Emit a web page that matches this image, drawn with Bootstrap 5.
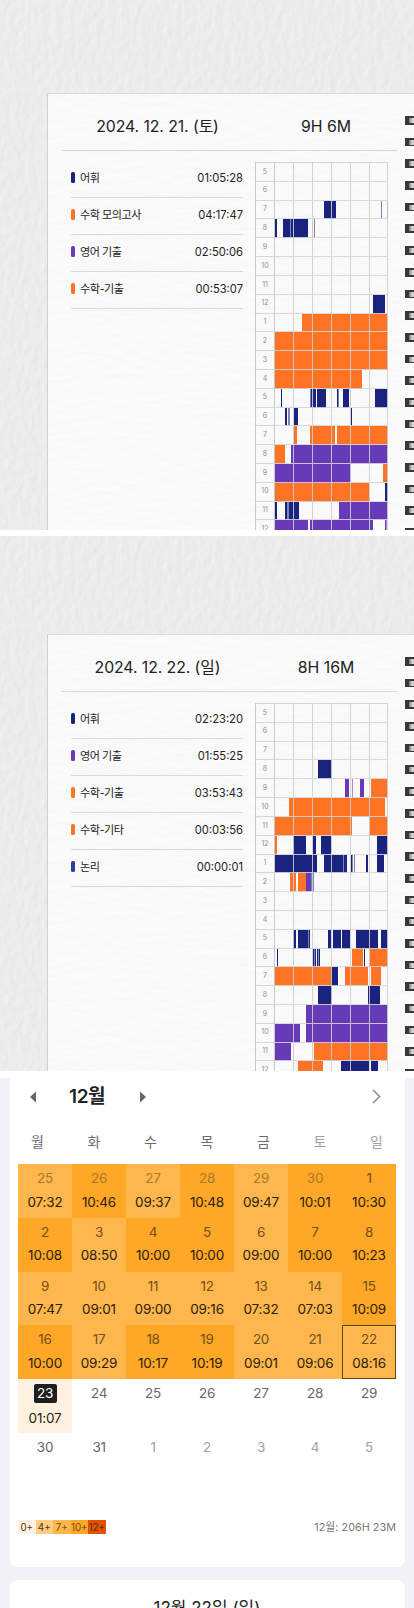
<!DOCTYPE html>
<html lang="ko">
<head>
<meta charset="utf-8">
<meta name="viewport" content="width=device-width, initial-scale=1">
<title>12월 플래너</title>
<link href="https://cdn.jsdelivr.net/npm/bootstrap@5.3.0/dist/css/bootstrap.min.css" rel="stylesheet">
<style>
  body { font-family: "Inter", "Noto Sans CJK KR", sans-serif; color: #222; background: #fff; height: 1608px; overflow: hidden; }
  .shot { overflow: hidden; background-color: #ececec; position: relative; padding-left: 47px;
    background-image: url("data:image/svg+xml,%3Csvg xmlns='http://www.w3.org/2000/svg' width='414' height='540'%3E%3Cfilter id='p' x='0' y='0' width='100%25' height='100%25' color-interpolation-filters='sRGB'%3E%3CfeTurbulence type='fractalNoise' baseFrequency='.15 .11' numOctaves='3' seed='4'/%3E%3CfeDiffuseLighting lighting-color='%23fff' surfaceScale='.12' diffuseConstant='1.068'%3E%3CfeDistantLight azimuth='25' elevation='60'/%3E%3C/feDiffuseLighting%3E%3C/filter%3E%3Crect width='414' height='540' filter='url(%23p)'/%3E%3C/svg%3E"); }
  .shot-a { height: 530px; padding-top: 93px; margin-bottom: 6px; }
  .shot-b { height: 535px; padding-top: 98px; margin-bottom: 7px; }
  .sheet { position: relative; height: 540px; border-left: 1px solid #d0d0d0; border-top: 1px solid #dadada; padding-left: 13px; background-color: #f9f9f9;
    background-image: url("data:image/svg+xml,%3Csvg xmlns='http://www.w3.org/2000/svg' width='414' height='540'%3E%3Cfilter id='p' x='0' y='0' width='100%25' height='100%25' color-interpolation-filters='sRGB'%3E%3CfeTurbulence type='fractalNoise' baseFrequency='.06 .17' numOctaves='2' seed='9'/%3E%3CfeDiffuseLighting lighting-color='%23fff' surfaceScale='.05' diffuseConstant='1.129'%3E%3CfeDistantLight azimuth='80' elevation='60'/%3E%3C/feDiffuseLighting%3E%3C/filter%3E%3Crect width='414' height='540' filter='url(%23p)'/%3E%3C/svg%3E"); }
  .sheet-head { width: 337px; height: 57px; border-bottom: 1px solid #d9d9db; padding-top: 9px; font-size: 15.8px; }
  .head-date { width: 192px; padding-left: 1px; letter-spacing: -.07px; }
  .head-total { width: 145px; padding-left: 1px; }
  .subjects { width: 172px; margin-left: 10px; padding-top: 9.5px; }
  .subject { height: 37px; padding-bottom: 2px; border-bottom: 1px solid #dadade; font-size: 11.1px; letter-spacing: -.5px; line-height: 16px; }
  .subject .tick { width: 4px; height: 11px; border-radius: 1.5px; margin-right: 5px; }
  .subject .spent { font-size: 11.2px; letter-spacing: 0; }
  .navy { background: #1a237e; } .indigo { background: #303f9f; }
  .orange { background: #ff7424; } .violet { background: #673ab7; }
  .hours { margin: 11px 0 0 12px; width: 133.4px; border-left: 1px solid #c9c9cc; border-top: 1px solid #d4d4d7; }
  .hour { height: 18.82px; font-size: 7px; color: #8e8e93; }
  .hour-no { width: 19px; border-right: 1px solid #c8c8cc; border-bottom: 1px solid #d6d6da; }
  .track { position: relative; width: 113.4px; overflow: hidden; }
  .seg { position: absolute; top: 0; bottom: 0; }
  .seg.faint { opacity: .55; }
  .rule { position: absolute; inset: 0; border-bottom: 1px solid rgba(212,212,217,.9); }
  .rule i { flex: 1; border-right: 1px solid rgba(204,204,210,.9); }
  .rings { position: absolute; left: 357px; top: 22px; }
  .ring { width: 12px; height: 8.7px; margin-bottom: 13px; background: #383838; position: relative; }
  .ring::after { content: ""; position: absolute; left: 4px; top: 2px; width: 6px; height: 5px; background: linear-gradient(90deg, #777, #ddd 60%, #aaa); }
  .planner { background: #f2f1f7; height: 530px; padding: 0 9.5px; }
  .month { background: #fff; height: 489px; border-radius: 0 0 8px 8px; padding: 0 8.5px; }
  .month-nav { height: 37px; }
  .month-name { font-size: 19px; font-weight: 600; letter-spacing: -.4px; line-height: 26px; width: 38px; margin: 0 33px 0 33px; white-space: nowrap; }
  .weekdays { height: 49px; padding: 3px 12.5px 0; font-size: 14px; color: #6c6c70; line-height: 47px; }
  .weekdays span { width: 14px; } .weekdays .off { color: #a0a0a4; }
  .days { display: grid; grid-template-columns: repeat(7, 54px); grid-auto-rows: 53.75px; }
  .day { padding-top: 5px; text-align: center; font-size: 13.5px; line-height: 18px; letter-spacing: -.3px; color: #66666a; }
  .day .num { display: inline-block; height: 18px; }
  .day .sum { display: block; margin-top: 5.5px; color: #2a200c; letter-spacing: -.2px; }
  .lv7, .lv10 { color: #725017; } .adj { color: #a87a28; } .blank { color: #a0a0a4; }
  .lv0 { background: #fff1df; } .lv4 { background: #ffcc80; } .lv7 { background: #ffb74d; } .lv10 { background: #ffa726; } .lv12 { background: #e65100; }
  .picked { box-shadow: inset 0 0 0 1px #5c4716; }
  .today .num { background: #1f1f1f; color: #fff; border-radius: 2px; width: 23px; height: 19px; margin: -1px 0 0; }
  .legend { height: 14px; font-size: 9.8px; line-height: 15px; color: #4b3818; }
  .legend span { width: 17.5px; text-align: center; white-space: nowrap; }
  .month-sum { font-size: 10.8px; letter-spacing: .04px; color: #77777b; line-height: 15px; }
  .foot { margin-top: 33px; }
  .detail { background: #fff; border-radius: 8px 8px 0 0; height: 40px; margin-top: 13px; padding-top: 15px; text-align: center; font-size: 17px; line-height: 26px; }
</style>
</head>
<body>
<section class="shot shot-a">
  <div class="sheet">
    <div class="sheet-head d-flex align-items-center text-center">
      <div class="head-date">2024. 12. 21. (토)</div><div class="head-total">9H 6M</div>
    </div>
    <div class="d-flex align-items-start">
      <div class="subjects">
        <div class="subject d-flex align-items-center"><i class="tick navy"></i><span>어휘</span><span class="spent ms-auto">01:05:28</span></div>
        <div class="subject d-flex align-items-center"><i class="tick orange"></i><span>수학 모의고사</span><span class="spent ms-auto">04:17:47</span></div>
        <div class="subject d-flex align-items-center"><i class="tick violet"></i><span>영어 기출</span><span class="spent ms-auto">02:50:06</span></div>
        <div class="subject d-flex align-items-center"><i class="tick orange"></i><span>수학-기출</span><span class="spent ms-auto">00:53:07</span></div>
      </div>
      <div class="hours" data-day="21"></div>
    </div>
    <div class="rings"></div>
  </div>
</section>
<section class="shot shot-b">
  <div class="sheet">
    <div class="sheet-head d-flex align-items-center text-center">
      <div class="head-date">2024. 12. 22. (일)</div><div class="head-total">8H 16M</div>
    </div>
    <div class="d-flex align-items-start">
      <div class="subjects">
        <div class="subject d-flex align-items-center"><i class="tick navy"></i><span>어휘</span><span class="spent ms-auto">02:23:20</span></div>
        <div class="subject d-flex align-items-center"><i class="tick violet"></i><span>영어 기출</span><span class="spent ms-auto">01:55:25</span></div>
        <div class="subject d-flex align-items-center"><i class="tick orange"></i><span>수학-기출</span><span class="spent ms-auto">03:53:43</span></div>
        <div class="subject d-flex align-items-center"><i class="tick orange"></i><span>수학-기타</span><span class="spent ms-auto">00:03:56</span></div>
        <div class="subject d-flex align-items-center"><i class="tick indigo"></i><span>논리</span><span class="spent ms-auto">00:00:01</span></div>
      </div>
      <div class="hours" data-day="22"></div>
    </div>
    <div class="rings"></div>
  </div>
</section>
<main class="planner">
  <div class="month">
    <div class="month-nav d-flex align-items-center">
      <svg width="6" height="12" viewBox="0 0 6 12" style="margin-left:12px"><path d="M6 .5v11L0 6z" fill="#66666a"/></svg>
      <span class="month-name">12월</span>
      <svg width="6" height="12" viewBox="0 0 6 12"><path d="M0 .5v11L6 6z" fill="#66666a"/></svg>
      <svg class="ms-auto" width="9" height="15" viewBox="0 0 9 15" style="margin-right:15px"><path d="M1 1l6.7 6.5L1 14" fill="none" stroke="#8c8c90" stroke-width="1.5"/></svg>
    </div>
    <div class="weekdays d-flex justify-content-between text-center">
      <span>월</span><span>화</span><span>수</span><span>목</span><span>금</span><span class="off">토</span><span class="off">일</span>
    </div>
    <div class="days"></div>
    <div class="foot d-flex justify-content-between">
      <div class="legend d-flex"><span class="lv0">0+</span><span class="lv4">4+</span><span class="lv7">7+</span><span class="lv10">10+</span><span class="lv12">12+</span></div>
      <div class="month-sum">12월: 206H 23M</div>
    </div>
  </div>
  <div class="detail">12월 22일 (일)</div>
</main>
<script src="https://cdn.jsdelivr.net/npm/bootstrap@5.3.0/dist/js/bootstrap.bundle.min.js"></script>
<script>
  // Study segments by table row: [colour, start, end], 339 units to the hour. Lower case = faint.
  const HOUR = 339;
  const log = {
    21: { 2: 'N145-182 n316-318 n334-336 N336-339', 3: 'N0-7 N25-46 n46-48 N48-100 n112-115 n116-118', 7: 'N294-329', 8: 'O81-339', 9: 'O0-339', 10: 'O0-339',
      11: 'O0-259', 12: 'n18-19 N19-22 n104-107 N107-124 N127-154 N184-188 n188-190 N202-220 N300-339', 13: 'N30-37 n40-45 N58-68 n226-227 N227-229',
      14: 'O58-67 O104-180 O184-339', 15: 'O0-30 P47-339', 16: 'P0-228 O322-339', 17: 'O0-280 N328-339',
      18: 'N0-7 N30-36 n36-43 N43-71 P190-339', 19: 'P0-99 P104-294 P328-333 p333-335' },
    22: { 3: 'N128-131 n131-133 N133-171', 4: 'P208-220 p229-234 P254-265 O288-339', 5: 'O41-330', 6: 'O0-231 O282-339',
      7: 'O0-7 N53-94 N114-124 N139-168 N305-339', 8: 'N0-127 N145-204 n204-206 N206-215 N226-229 n229-231 n236-240 N271-277 N305-327',
      9: 'O46-55 o55-58 O58-64 O70-93 P93-107 n109-117', 12: 'N53-64 N70-100 n100-101 N101-103 N157-167 N173-196 N201-224 N241-307 N317-339',
      13: 'N7-9 N115-117 n117-119 N119-123 N127-130 n130-131 N131-134 O231-262 N265-268 O282-339', 14: 'O0-167 N168-187 O208-279 O288-316',
      15: 'N128-171 N279-313', 16: 'P93-339', 17: 'P0-76 P93-339', 18: 'P0-47 O116-339', 19: 'O70-144 N197-280 N288-307' }
  };
  const tone = { n: 'navy', o: 'orange', p: 'violet' };
  document.querySelectorAll('.hours').forEach(table => {
    const rows = log[table.dataset.day];
    for (let i = 0; i < 20; i++) {
      const segs = (rows[i] || '').split(' ').filter(Boolean).map(s => {
        const [a, b] = s.slice(1).split('-').map(Number), k = s[0].toLowerCase();
        return `<b class="seg ${tone[k]}${k === s[0] ? ' faint' : ''}" style="left:${a / HOUR * 100}%;width:${(b - a) / HOUR * 100}%"></b>`;
      }).join('');
      table.insertAdjacentHTML('beforeend', `<div class="hour d-flex"><div class="hour-no d-flex align-items-center justify-content-center flex-shrink-0">${(i + 4) % 12 + 1}</div><div class="track flex-shrink-0">${segs}<div class="rule d-flex">${'<i></i>'.repeat(6)}</div></div></div>`);
    }
  });
  document.querySelectorAll('.rings').forEach(r => r.innerHTML = '<div class="ring"></div>'.repeat(20));

  // Calendar cells: day, total; flags: a = adjacent month, t = today, s = selected.
  const cells = `25 07:32 a|26 10:46 a|27 09:37 a|28 10:48 a|29 09:47 a|30 10:01 a|1 10:30|2 10:08|3 08:50|4 10:00|5 10:00|6 09:00|7 10:00|8 10:23|9 07:47|10 09:01|11 09:00|12 09:16|13 07:32|14 07:03|15 10:09|16 10:00|17 09:29|18 10:17|19 10:19|20 09:01|21 09:06|22 08:16 s|23 01:07 t|24|25|26|27|28|29|30|31|1 - a|2 - a|3 - a|4 - a|5 - a`;
  document.querySelector('.days').innerHTML = cells.split('|').map(c => {
    const [d, t, f] = c.split(' '), has = t && t !== '-', h = has ? parseInt(t, 10) : -1;
    const cls = [h >= 10 ? 'lv10' : h >= 7 ? 'lv7' : h >= 0 ? 'lv0' : '', f === 'a' ? (has ? 'adj' : 'blank') : '', f === 't' ? 'today' : '', f === 's' ? 'picked' : ''].join(' ');
    return `<div class="day ${cls}"><span class="num">${d}</span>${has ? `<span class="sum">${t}</span>` : ''}</div>`;
  }).join('');
</script>
</body>
</html>
